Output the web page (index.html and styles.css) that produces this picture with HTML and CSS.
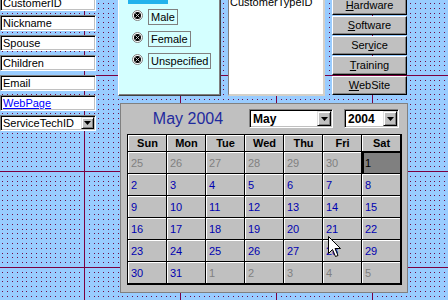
FILE: index.html
```html
<!DOCTYPE html>
<html lang="en">
<head>
    <meta charset="UTF-8">
    <meta name="viewport" content="width=device-width, initial-scale=1.0">
    <title>Customers - form design</title>
    <link rel="stylesheet" href="styles.css">
</head>
<body>
<div class="canvas">
    <!-- design grid: dots every 1/20 inch, lines every inch -->
    <svg class="design-grid" width="448" height="300">
        <defs>
            <pattern id="dots" x="12" y="3" width="24" height="24" patternUnits="userSpaceOnUse">
                <g fill="#6e0a46">
                    <rect x="0" y="0" width="1" height="1"/><rect x="5" y="0" width="1" height="1"/><rect x="10" y="0" width="1" height="1"/><rect x="14" y="0" width="1" height="1"/><rect x="19" y="0" width="1" height="1"/>
                    <rect x="0" y="5" width="1" height="1"/><rect x="5" y="5" width="1" height="1"/><rect x="10" y="5" width="1" height="1"/><rect x="14" y="5" width="1" height="1"/><rect x="19" y="5" width="1" height="1"/>
                    <rect x="0" y="10" width="1" height="1"/><rect x="5" y="10" width="1" height="1"/><rect x="10" y="10" width="1" height="1"/><rect x="14" y="10" width="1" height="1"/><rect x="19" y="10" width="1" height="1"/>
                    <rect x="0" y="14" width="1" height="1"/><rect x="5" y="14" width="1" height="1"/><rect x="10" y="14" width="1" height="1"/><rect x="14" y="14" width="1" height="1"/><rect x="19" y="14" width="1" height="1"/>
                    <rect x="0" y="19" width="1" height="1"/><rect x="5" y="19" width="1" height="1"/><rect x="10" y="19" width="1" height="1"/><rect x="14" y="19" width="1" height="1"/><rect x="19" y="19" width="1" height="1"/>
                </g>
            </pattern>
        </defs>
        <rect width="448" height="300" fill="#99ccff"/>
        <rect width="448" height="300" fill="url(#dots)"/>
        <g fill="#7a0040">
            <rect x="84" y="0" width="1" height="300"/>
            <rect x="180" y="0" width="1" height="300"/>
            <rect x="276" y="0" width="1" height="300"/>
            <rect x="372" y="0" width="1" height="300"/>
            <rect x="0" y="75" width="448" height="1"/>
            <rect x="0" y="171" width="448" height="1"/>
            <rect x="0" y="267" width="448" height="1"/>
        </g>
    </svg>

    <div class="form">
        <div class="fields">
            <div class="field">CustomerID</div>
            <div class="field">Nickname</div>
            <div class="field">Spouse</div>
            <div class="field">Children</div>
            <div class="field">Email</div>
            <div class="field field--link">WebPage</div>
            <div class="field field--combo">
                <span>ServiceTechID</span>
                <span class="drop"><svg width="7" height="4"><path d="M0 0h7L3.5 4z"/></svg></span>
            </div>
        </div>

        <div class="right">
            <div class="top-row">
                <div class="option-frame">
                    <div class="frame-label"></div>
                    <div class="opt">
                        <svg class="radio" width="11" height="11" viewBox="0 0 11 11">
                            <circle cx="5.5" cy="5.5" r="5" fill="#fff" stroke="#808080"/>
                            <circle cx="5.5" cy="5.5" r="3.5" fill="#000"/>
                            <path d="M3.5 3.5L7.5 7.5M7.5 3.5L3.5 7.5" stroke="#c8c8c8"/>
                        </svg>
                        <span class="opt__label">Male</span>
                    </div>
                    <div class="opt">
                        <svg class="radio" width="11" height="11" viewBox="0 0 11 11">
                            <circle cx="5.5" cy="5.5" r="5" fill="#fff" stroke="#808080"/>
                            <circle cx="5.5" cy="5.5" r="3.5" fill="#000"/>
                            <path d="M3.5 3.5L7.5 7.5M7.5 3.5L3.5 7.5" stroke="#c8c8c8"/>
                        </svg>
                        <span class="opt__label">Female</span>
                    </div>
                    <div class="opt">
                        <svg class="radio" width="11" height="11" viewBox="0 0 11 11">
                            <circle cx="5.5" cy="5.5" r="5" fill="#fff" stroke="#808080"/>
                            <circle cx="5.5" cy="5.5" r="3.5" fill="#000"/>
                            <path d="M3.5 3.5L7.5 7.5M7.5 3.5L3.5 7.5" stroke="#c8c8c8"/>
                        </svg>
                        <span class="opt__label">Unspecified</span>
                    </div>
                </div>

                <div class="listbox">CustomerTypeID</div>

                <div class="buttons">
                    <div class="btn"><u>H</u>ardware</div>
                    <div class="btn"><u>S</u>oftware</div>
                    <div class="btn">Ser<u>v</u>ice</div>
                    <div class="btn"><u>T</u>raining</div>
                    <div class="btn"><u>W</u>ebSite</div>
                </div>
            </div>

            <div class="calendar">
                <div class="cal-head">
                    <div class="cal-title">May 2004</div>
                    <div class="cal-combo cal-combo--month">
                        <span>May</span>
                        <span class="drop"><svg width="7" height="4"><path d="M0 0h7L3.5 4z"/></svg></span>
                    </div>
                    <div class="cal-combo cal-combo--year">
                        <span>2004</span>
                        <span class="drop"><svg width="7" height="4"><path d="M0 0h7L3.5 4z"/></svg></span>
                    </div>
                </div>
                <div class="cal-grid">
                    <div class="day-name">Sun</div>
                    <div class="day-name">Mon</div>
                    <div class="day-name">Tue</div>
                    <div class="day-name">Wed</div>
                    <div class="day-name">Thu</div>
                    <div class="day-name">Fri</div>
                    <div class="day-name">Sat</div>

                    <div class="day other">25</div>
                    <div class="day other">26</div>
                    <div class="day other">27</div>
                    <div class="day other">28</div>
                    <div class="day other">29</div>
                    <div class="day other">30</div>
                    <div class="day selected">1</div>

                    <div class="day">2</div>
                    <div class="day">3</div>
                    <div class="day">4</div>
                    <div class="day">5</div>
                    <div class="day">6</div>
                    <div class="day">7</div>
                    <div class="day">8</div>

                    <div class="day">9</div>
                    <div class="day">10</div>
                    <div class="day">11</div>
                    <div class="day">12</div>
                    <div class="day">13</div>
                    <div class="day">14</div>
                    <div class="day">15</div>

                    <div class="day">16</div>
                    <div class="day">17</div>
                    <div class="day">18</div>
                    <div class="day">19</div>
                    <div class="day">20</div>
                    <div class="day">21</div>
                    <div class="day">22</div>

                    <div class="day">23</div>
                    <div class="day">24</div>
                    <div class="day">25</div>
                    <div class="day">26</div>
                    <div class="day">27</div>
                    <div class="day">28</div>
                    <div class="day">29</div>

                    <div class="day">30</div>
                    <div class="day">31</div>
                    <div class="day other">1</div>
                    <div class="day other">2</div>
                    <div class="day other">3</div>
                    <div class="day other">4</div>
                    <div class="day other">5</div>
                </div>
            </div>
        </div>
    </div>

    <!-- mouse pointer -->
    <svg class="pointer" width="14" height="22" viewBox="0 0 14 22">
        <path d="M0.5 0.5V17.5L4.5 13.5L7.5 20.5L10 19.5L7 12.5H12.5Z" fill="#fff" stroke="#000"/>
    </svg>
</div>
</body>
</html>
```

FILE: styles.css
```css
html, body{
    margin: 0;
    padding: 0;
}
body{
    font-family: "Liberation Sans", Arial, sans-serif;
    font-size: 11px;
    color: #000;
}
.canvas{
    position: relative;
    width: 448px;
    height: 300px;
    overflow: hidden;
}
.design-grid{
    position: absolute;
    left: 0;
    top: 0;
}
.form{
    position: relative;
    display: flex;
    align-items: flex-start;
}

/* left column text boxes */
.fields{
    display: flex;
    flex-direction: column;
    gap: 4px;
    width: 96px;
    margin-top: -5px;
}
.field{
    box-sizing: border-box;
    height: 16px;
    line-height: 14px;
    padding-left: 2px;
    background-color: #fff;
    border: 1px solid;
    border-color: #808080 #fff #fff #808080;
    box-shadow: inset 1px 1px 0 #000, inset -1px -1px 0 #c0c0c0;
    white-space: nowrap;
}
.field--link{
    color: #0000ff;
    text-decoration: underline;
}
.field--combo{
    display: flex;
    justify-content: space-between;
    align-items: center;
    padding-right: 1px;
}
.drop{
    box-sizing: border-box;
    display: flex;
    align-items: center;
    justify-content: center;
    width: 13px;
    height: 12px;
    background-color: #c0c0c0;
    border: 1px solid;
    border-color: #dfdfdf #000 #000 #dfdfdf;
    box-shadow: inset 1px 1px 0 #fff, inset -1px -1px 0 #808080;
}

.right{
    display: flex;
    flex-direction: column;
    margin-left: 22px;
}
.top-row{
    display: flex;
    gap: 7px;
    height: 106px;
    margin-top: -10px;
}

/* option group */
.option-frame{
    box-sizing: border-box;
    width: 103px;
    height: 106px;
    background-color: #d4ffff;
    border: 1px solid;
    border-color: #fff #404040 #404040 #fff;
    box-shadow: inset -1px -1px 0 #808080;
    display: flex;
    flex-direction: column;
    gap: 6px;
}
.frame-label{
    width: 40px;
    height: 13px;
    margin-left: 9px;
    margin-bottom: -1px;
    background-color: #22b2ec;
}
.opt{
    display: flex;
    align-items: flex-start;
    gap: 5px;
    padding-left: 13px;
    height: 16px;
}
.radio{
    flex: none;
    margin-top: 1px;
}
.opt__label{
    box-sizing: border-box;
    height: 16px;
    line-height: 14px;
    padding: 0 2px;
    border: 1px solid #808080;
    white-space: nowrap;
}

.listbox{
    box-sizing: border-box;
    width: 97px;
    height: 106px;
    padding: 5px 1px 0;
    background-color: #fff;
    border: 1px solid;
    border-color: #808080 #d4d0c8 #d4d0c8 #808080;
    border-right-width: 2px;
    border-bottom-width: 2px;
    line-height: 13px;
}

.buttons{
    display: flex;
    flex-direction: column;
    gap: 1px;
    width: 75px;
    padding-top: 6px;
}
.btn{
    box-sizing: border-box;
    height: 19px;
    line-height: 17px;
    text-align: center;
    background-color: #c0c0c0;
    border: 1px solid;
    border-color: #fff #000 #000 #fff;
    box-shadow: inset -1px -1px 0 #808080;
}

/* calendar control */
.calendar{
    box-sizing: border-box;
    width: 288px;
    height: 190px;
    margin: 7px 0 0 2px;
    padding: 5px 6px 0;
    background-color: #c0c0c0;
    border: 1px solid #808080;
}
.cal-head{
    display: flex;
    align-items: center;
    height: 19px;
    margin-bottom: 6px;
}
.cal-title{
    flex: 1;
    text-align: center;
    font-size: 16px;
    line-height: 19px;
    color: #1f2a9e;
}
.cal-combo{
    box-sizing: border-box;
    display: flex;
    justify-content: space-between;
    align-items: center;
    height: 19px;
    padding: 0 1px 0 3px;
    background-color: #fff;
    border: 1px solid;
    border-color: #808080 #fff #fff #808080;
    box-shadow: inset 1px 1px 0 #000, inset -1px -1px 0 #c0c0c0;
    font-weight: bold;
    font-size: 12px;
}
.cal-combo .drop{
    width: 14px;
    height: 15px;
}
.cal-combo--month{
    width: 84px;
}
.cal-combo--year{
    width: 55px;
    margin-left: 11px;
    margin-right: 2px;
}
.cal-grid{
    display: grid;
    grid-template-columns: repeat(7, 38px);
    grid-template-rows: 16px repeat(6, 21px);
    gap: 1px;
    width: fit-content;
    background-color: #000;
    border: 1px solid #000;
    border-right-width: 2px;
    border-bottom-width: 2px;
}
.day-name, .day{
    box-sizing: border-box;
    background-color: #c0c0c0;
    border-top: 1px solid #fff;
    border-left: 1px solid #fff;
}
.day-name{
    text-align: center;
    font-weight: bold;
    line-height: 14px;
}
.day{
    display: flex;
    align-items: center;
    padding-left: 2px;
    color: #0000b0;
}
.day.other{
    color: #808080;
}
.day.selected{
    background-color: #808080;
    color: #000;
    border-color: #000;
    border-left-width: 2px;
    padding-left: 1px;
}

.pointer{
    position: absolute;
    left: 328px;
    top: 236px;
}
```
